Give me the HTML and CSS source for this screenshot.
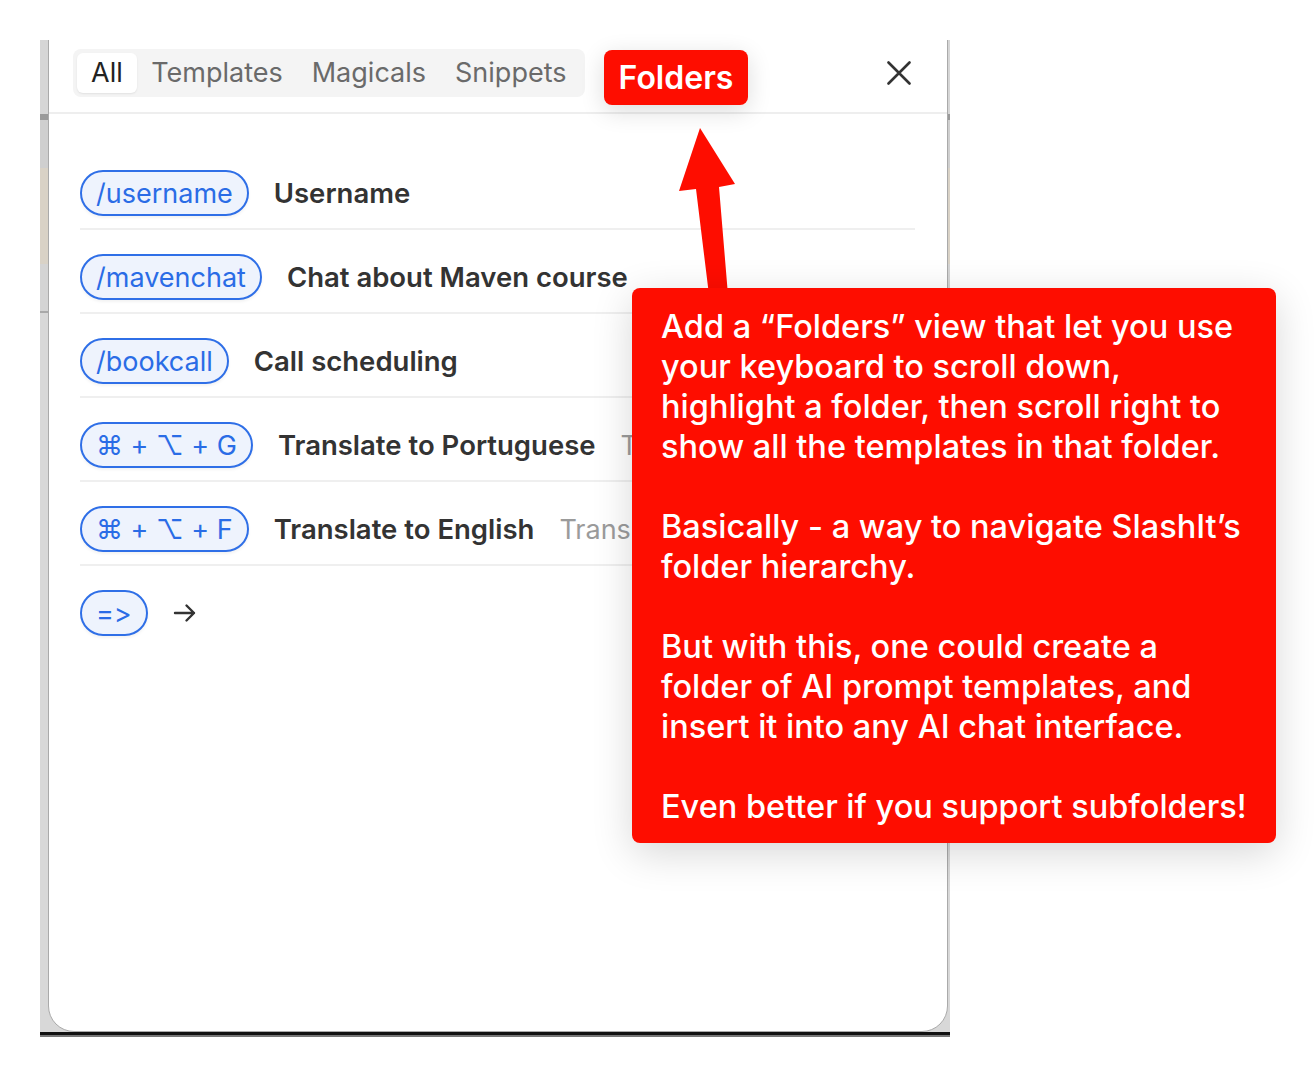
FILE: index.html
```html
<!DOCTYPE html>
<html lang="en">
<head>
  <title>SlashIt Folders</title>
  <link rel="stylesheet" href="styles.css">
</head>
<body>

<div class="frame">
  <div class="panel">
    <div class="panel-head">
      <div class="tabs">
        <span class="tab active">All</span>
        <span class="tab">Templates</span>
        <span class="tab">Magicals</span>
        <span class="tab">Snippets</span>
      </div>
      <button class="close" type="button">
        <svg width="24" height="24" viewBox="0 0 24 24"><path d="M1.5 1.5 L22.5 22.5 M22.5 1.5 L1.5 22.5" stroke="#333" stroke-width="2.6" stroke-linecap="round" fill="none"/></svg>
      </button>
    </div>

    <ul class="list">
      <li class="row"><span class="pill">/username</span><span class="label">Username</span></li>
      <li class="row"><span class="pill">/mavenchat</span><span class="label">Chat about Maven course</span></li>
      <li class="row"><span class="pill">/bookcall</span><span class="label">Call scheduling</span></li>
      <li class="row"><span class="pill">⌘ + ⌥ + G</span><span class="label">Translate to Portuguese</span><span class="desc">Translate to Portuguese</span></li>
      <li class="row"><span class="pill">⌘ + ⌥ + F</span><span class="label">Translate to English</span><span class="desc">Translate to English</span></li>
      <li class="row">
        <span class="pill">=&gt;</span>
        <span class="label">
          <svg class="go" width="24" height="24" viewBox="0 0 24 24"><path d="M2 12 H21 M13.5 4.5 L21 12 L13.5 19.5" stroke="#333" stroke-width="2.4" stroke-linecap="round" stroke-linejoin="round" fill="none"/></svg>
        </span>
      </li>
    </ul>
  </div>
</div>

<!-- annotation on top of the screenshot -->
<div class="folders">Folders</div>

<svg class="pointer" width="70" height="180" viewBox="0 0 70 180">
  <polygon points="30,8 65,64 49,67 58,175 39,175 26,69 9,71" fill="#fe0d00"/>
</svg>

<div class="note">
  <p>Add a “Folders” view that let you use<br>your keyboard to scroll down,<br>highlight a folder, then scroll right to<br>show all the templates in that folder.</p>
  <p>Basically - a way to navigate SlashIt’s<br>folder hierarchy.</p>
  <p>But with this, one could create a<br>folder of AI prompt templates, and<br>insert it into any AI chat interface.</p>
  <p>Even better if you support subfolders!</p>
</div>

</body>
</html>
```

FILE: styles.css
```css
body {
  margin: 0;
  background-color: #fff;
  font-family: Inter, "Noto Sans", "DejaVu Sans", sans-serif;
  font-variant-ligatures: none;
  font-feature-settings: "calt" 0, "liga" 0;
  position: relative;
  width: 1316px;
  height: 1078px;
  overflow: hidden;
}
.frame {
  margin: 40px 0 0 40px;
  width: 910px;
  height: 992px;
  overflow: hidden;
  background: linear-gradient(to bottom,
    #d6d6d6 0, #d6d6d6 74px,
    #9a9a9a 74px, #9a9a9a 80px,
    #cfcfcf 80px, #cfcfcf 128px,
    #d9d2c6 128px, #d9d2c6 224px,
    #d4d4d4 224px, #d4d4d4 271px,
    #a9a9a9 271px, #a9a9a9 273px,
    #d8d8d8 273px);
  border-bottom: 3px solid #111;
  box-shadow: 0 2px 0 #777;
}
.panel {
  margin: -30px 0 0 8px;
  width: 900px;
  height: 1022px;
  box-sizing: border-box;
  background-color: #fff;
  border: 1px solid #aaa;
  border-radius: 26px;
}
.panel-head {
  display: flex;
  align-items: center;
  padding: 38px 36px 15px 24px;
  border-bottom: 2px solid #eeeeee;
}
.tabs {
  display: flex;
  padding: 4px;
  border-radius: 8px;
  background-color: #f4f4f4;
}
.tab {
  height: 40px;
  line-height: 40px;
  padding: 0 14.5px;
  font-size: 27px;
  color: #6a6a6a;
}
.tab.active {
  padding: 0 14px 0 14px;
  color: #222;
  background-color: #fff;
  border-radius: 6px;
  box-shadow: 0 1px 2px rgba(0, 0, 0, 0.08);
}
.close {
  margin-left: auto;
  padding: 0;
  border: none;
  background: none;
  width: 24px;
  height: 24px;
}
.close svg {
  display: block;
}
.list {
  list-style: none;
  margin: 0 32px 0 31px;
  padding: 32px 0 0 0;
}
.row {
  display: flex;
  align-items: center;
  padding: 24px 0 12px;
  border-bottom: 2px solid #efefef;
  white-space: nowrap;
  overflow: hidden;
}
.row:last-child {
  border-bottom: none;
}
.pill {
  display: inline-flex;
  align-items: center;
  height: 46px;
  box-sizing: border-box;
  padding: 0 14px;
  border: 2px solid #2f6fe7;
  border-radius: 23px;
  background-color: #eef3fd;
  color: #2a6ce6;
  font-size: 27px;
  box-shadow: 0 2px 3px rgba(0, 0, 0, 0.05);
}
.label {
  margin-left: 25px;
  font-size: 27.5px;
  font-weight: 600;
  color: #333;
}
.desc {
  margin-left: 25px;
  font-size: 27px;
  color: #9b9b9b;
}
.go {
  display: block;
}
.folders {
  position: absolute;
  left: 604px;
  top: 50px;
  width: 144px;
  height: 55px;
  line-height: 55px;
  text-align: center;
  border-radius: 8px;
  background-color: #fe0d00;
  color: #fff;
  font-size: 32px;
  font-weight: 600;
  box-shadow: 0 6px 24px rgba(0, 0, 0, 0.14);
}
.pointer {
  position: absolute;
  left: 670px;
  top: 120px;
}
.note {
  position: absolute;
  left: 632px;
  top: 288px;
  width: 644px;
  height: 555px;
  box-sizing: border-box;
  padding: 19px 0 16px 29px;
  border-radius: 8px;
  background-color: #fe0d00;
  color: #fff;
  font-size: 32.5px;
  font-weight: 500;
  line-height: 40px;
  white-space: nowrap;
  box-shadow: 0 10px 40px rgba(0, 0, 0, 0.16);
}
.note p {
  margin: 0 0 40px 0;
}
.note p:last-child {
  margin-bottom: 0;
}
```
